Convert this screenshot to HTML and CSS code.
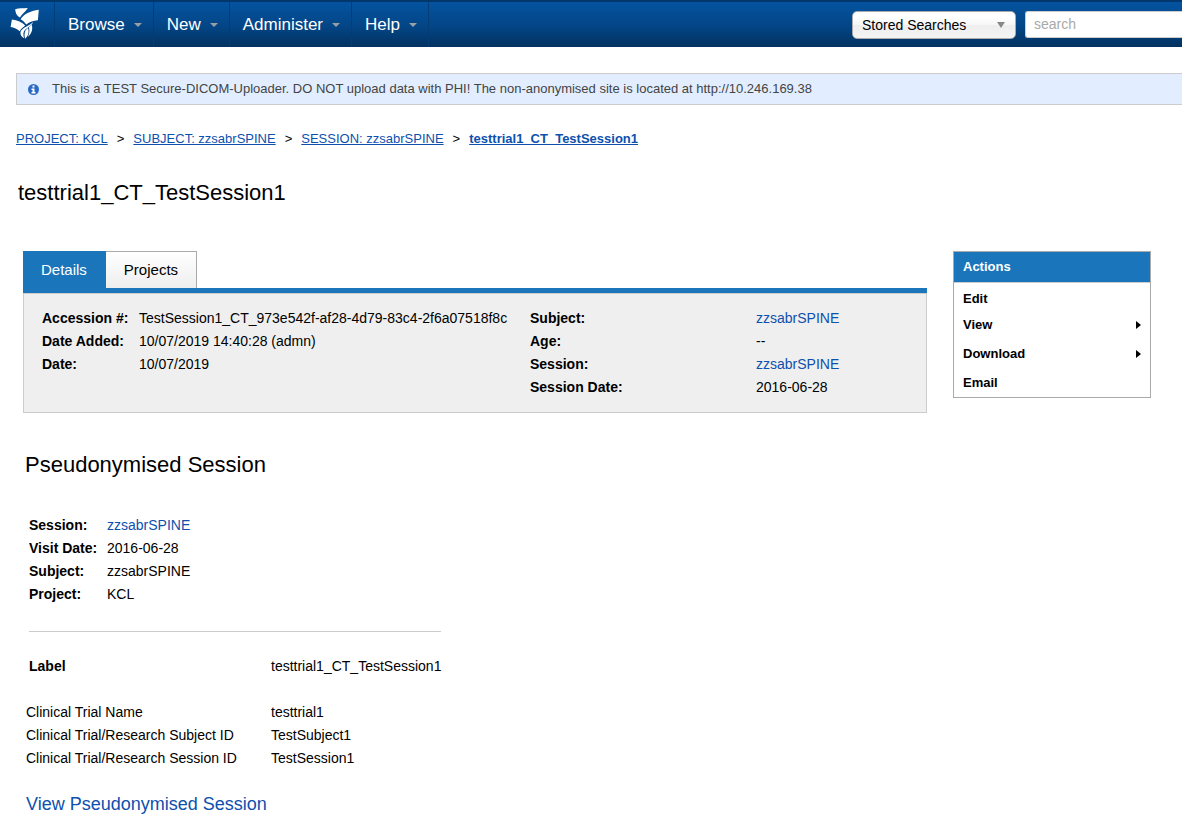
FILE: index.html
```html
<!DOCTYPE html>
<html lang="en">
<head>
<meta charset="utf-8">
<title>testtrial1_CT_TestSession1</title>
<link rel="stylesheet" href="styles.css">
</head>
<body>
<header class="topbar">
  <a class="logo" href="#" aria-label="Home">
    <svg width="32" height="34" viewBox="0 0 32 34" fill="#fff" aria-hidden="true">
      <path d="M6.2 3.2C10 2 14 2.6 18.8 2C17 5 13.4 7.6 10.9 11.4C7.6 9.8 6.3 6.3 6.2 3.2Z"/>
      <path d="M29.8 3.8L28.9 14.3C24.5 15 20.6 15.6 17.2 18.6C15.8 16.2 13.8 14.4 11.6 13.2C14.7 8.4 21.2 4.9 29.8 3.8Z"/>
      <path d="M2.9 13.4C8.3 14 13.2 16 16.2 19.5C14.4 21.2 12 22.3 10.8 25.2C8.4 22.8 5 21.3 1.6 20.9Z"/>
      <path d="M24 16C22.6 21 16.4 21.8 14.8 25.8C14 28 14.6 30.4 15.1 32.2C12.8 31 11.4 29 11.4 26.7C11.6 21.8 19.5 20.8 24 16Z"/>
      <path d="M19 22C20.6 26.5 18.8 30.4 16 32.7C15.2 29 14.9 24.7 19 22Z"/>
      <path d="M22.8 18.8C24 23.5 22.6 28 18.6 31C20.5 27.8 20.8 24.4 19.9 21.4Z"/>
    </svg>
  </a>
  <nav class="menu">
    <button class="menu-item">Browse</button>
    <button class="menu-item">New</button>
    <button class="menu-item">Administer</button>
    <button class="menu-item">Help</button>
  </nav>
  <div class="search">
    <div class="stored">
      <select class="stored-select" aria-label="Stored Searches"><option>Stored Searches</option></select>
    </div>
    <input class="search-input" type="text" placeholder="search" aria-label="search">
  </div>
</header>

<div class="notice">
  <svg class="notice-icon" width="11" height="11" viewBox="0 0 11 11" aria-hidden="true">
    <circle cx="5.5" cy="5.5" r="5.5" fill="#2a6ac4"/>
    <path fill="#fff" d="M4.5 1.5h2v2h-2zM3.5 4.5h3v3.5h1v1.5h-4V8h1V6h-1z"/>
  </svg>
  <span class="notice-text">This is a TEST Secure-DICOM-Uploader. DO NOT upload data with PHI! The non-anonymised site is located at http://10.246.169.38</span>
</div>

<nav class="crumbs" aria-label="Breadcrumb">
  <a href="#">PROJECT: KCL</a><span>&gt;</span>
  <a href="#">SUBJECT: zzsabrSPINE</a><span>&gt;</span>
  <a href="#">SESSION: zzsabrSPINE</a><span>&gt;</span>
  <a class="current" href="#">testtrial1_CT_TestSession1</a>
</nav>

<h1 class="title">testtrial1_CT_TestSession1</h1>

<div class="columns">
  <section class="summary">
    <div class="tabs" role="tablist">
      <button class="tab selected" role="tab" aria-selected="true">Details</button>
      <button class="tab" role="tab" aria-selected="false">Projects</button>
    </div>
    <div class="panel">
      <table class="facts accession">
        <tr><th scope="row">Accession #:</th><td>TestSession1_CT_973e542f-af28-4d79-83c4-2f6a07518f8c</td></tr>
        <tr><th scope="row">Date Added:</th><td>10/07/2019 14:40:28 (admn)</td></tr>
        <tr><th scope="row">Date:</th><td>10/07/2019</td></tr>
      </table>
      <table class="facts subject">
        <tr><th scope="row">Subject:</th><td><a href="#">zzsabrSPINE</a></td></tr>
        <tr><th scope="row">Age:</th><td>--</td></tr>
        <tr><th scope="row">Session:</th><td><a href="#">zzsabrSPINE</a></td></tr>
        <tr><th scope="row">Session Date:</th><td>2016-06-28</td></tr>
      </table>
    </div>
  </section>
  <aside class="actions">
    <h2 class="actions-title">Actions</h2>
    <div class="actions-list">
      <button class="action">Edit</button>
      <button class="action has-menu">View</button>
      <button class="action has-menu">Download</button>
      <button class="action">Email</button>
    </div>
  </aside>
</div>

<section class="session">
  <h2 class="session-title">Pseudonymised Session</h2>
  <table class="facts visit">
    <tr><th scope="row">Session:</th><td><a href="#">zzsabrSPINE</a></td></tr>
    <tr><th scope="row">Visit Date:</th><td>2016-06-28</td></tr>
    <tr><th scope="row">Subject:</th><td>zzsabrSPINE</td></tr>
    <tr><th scope="row">Project:</th><td>KCL</td></tr>
  </table>
  <hr class="rule">
  <table class="facts label">
    <tr><th scope="row">Label</th><td>testtrial1_CT_TestSession1</td></tr>
  </table>
  <table class="facts trial">
    <tr><th scope="row">Clinical Trial Name</th><td>testtrial1</td></tr>
    <tr><th scope="row">Clinical Trial/Research Subject ID</th><td>TestSubject1</td></tr>
    <tr><th scope="row">Clinical Trial/Research Session ID</th><td>TestSession1</td></tr>
  </table>
  <a class="session-link" href="#">View Pseudonymised Session</a>
</section>
</body>
</html>
```
FILE: styles.css
```css
* { box-sizing: border-box; }
body {
  margin: 0;
  background: #fff;
  color: #000;
  font: 14px/23px "Liberation Sans", Arial, sans-serif;
  overflow-x: hidden;
}
a { color: #0d50ad; text-decoration: none; }
button { font-family: inherit; margin: 0; cursor: pointer; }

.topbar {
  display: flex;
  height: 47px;
  border-top: 2px solid #02376c;
  background: linear-gradient(#0453a0, #034585 55%, #023260);
}
.logo { width: 55px; padding: 4px 0 0 9px; }
.logo svg { display: block; }
.menu { display: flex; border-left: 1px solid #033d78; margin-left: -1px; }
.menu-item {
  display: flex;
  align-items: center;
  gap: 9px;
  padding: 0 11px 0 13px;
  border: 0;
  border-right: 1px solid #033d78;
  background: none;
  color: #fff;
  font-size: 17px;
}
.menu-item::after {
  content: "";
  border: 4px solid transparent;
  border-top-color: #9a9fa5;
  border-bottom: 0;
}
.search { display: flex; gap: 9px; margin-left: auto; padding-top: 9px; }
.stored { position: relative; width: 164px; }
.stored::after {
  content: "";
  position: absolute;
  right: 11px;
  top: 11px;
  border: 4px solid transparent;
  border-top: 6px solid #888;
  border-bottom: 0;
  pointer-events: none;
}
.stored-select {
  appearance: none;
  width: 100%;
  height: 28px;
  padding: 0 9px;
  border: 1px solid #aaa;
  border-radius: 5px;
  background: linear-gradient(#fff 20%, #f6f6f6 50%, #eee 52%, #f4f4f4);
  color: #000;
  font: 14px "Liberation Sans", Arial, sans-serif;
}
.search-input {
  width: 157px;
  height: 27px;
  padding: 0 8px 2px;
  border: 1px solid #ccc;
  border-right: 0;
  border-radius: 3px 0 0 3px;
  background: #fff;
  font: 14px "Liberation Sans", Arial, sans-serif;
}
.search-input::placeholder { color: #a9a9a9; }

.notice {
  display: flex;
  align-items: center;
  gap: 13px;
  height: 32px;
  margin: 26px 0 0 16px;
  padding-left: 11px;
  border: 1px solid #ccc;
  border-right: 0;
  background: #e2eeff;
  color: #444;
  font-size: 13px;
}
.notice-text { padding-bottom: 2px; }

.crumbs {
  display: flex;
  gap: 9px;
  margin: 22px 16px 0;
  font-size: 13px;
}
.crumbs a { text-decoration: underline; }
.crumbs .current { font-weight: bold; }

.title { margin: 28px 18px 0; font-size: 22px; font-weight: normal; line-height: 30px; }

.columns { display: flex; align-items: flex-start; gap: 26px; margin: 43px 31px 0 23px; }
.summary { flex: 1; }
.tabs { display: flex; border-bottom: 5px solid #1a75bb; }
.tab {
  height: 37px;
  padding: 0 18px 2px;
  border: 1px solid #aaa;
  border-width: 1px 1px 0 0;
  background: linear-gradient(#fff, #eee);
  color: #000;
  font-size: 15px;
}
.tab.selected { border-color: #1a75bb; background: #1a75bb; color: #fff; }
.panel {
  display: flex;
  min-height: 120px;
  padding: 13px 18px;
  border: 1px solid #ccc;
  background: #efefef;
}

.facts { border-collapse: collapse; }
.facts th, .facts td { padding: 0; text-align: left; white-space: nowrap; }
.accession, .subject { align-self: flex-start; }
.accession { width: 488px; }
.accession th { width: 97px; }
.subject th { width: 226px; }

.actions { width: 198px; border: 1px solid #aaa; background: #fff; }
.actions-title {
  margin: 0;
  padding: 0 9px;
  border-bottom: 1px solid #ccc;
  background: #1a75bb;
  color: #fff;
  font-size: 13px;
  line-height: 30px;
}
.actions-list { padding: 3px 0 1px; }
.action {
  display: flex;
  align-items: center;
  justify-content: space-between;
  width: 100%;
  height: 28px;
  padding: 0 9px;
  border: 0;
  background: none;
  color: #000;
  font-size: 13px;
  font-weight: bold;
}
.action:first-child { height: 24px; }
.action.has-menu { height: 29px; }
.has-menu::after {
  content: "";
  border: 4px solid transparent;
  border-left: 5px solid #000;
  border-right: 0;
}

.session { padding: 37px 25px 18px; }
.session-title { margin: 0 0 34px; font-size: 22px; font-weight: normal; line-height: 30px; }
.visit { margin-left: 4px; }
.visit th { width: 78px; }
.rule { width: 412px; height: 1px; margin: 25px 0 23px 4px; border: 0; background: #ccc; }
.label { margin-left: 4px; }
.label th { width: 242px; }
.trial { margin: 23px 0 0 1px; }
.trial th { width: 245px; font-weight: normal; }
.session-link { display: inline-block; margin: 23px 0 0 1px; font-size: 18px; }
```
